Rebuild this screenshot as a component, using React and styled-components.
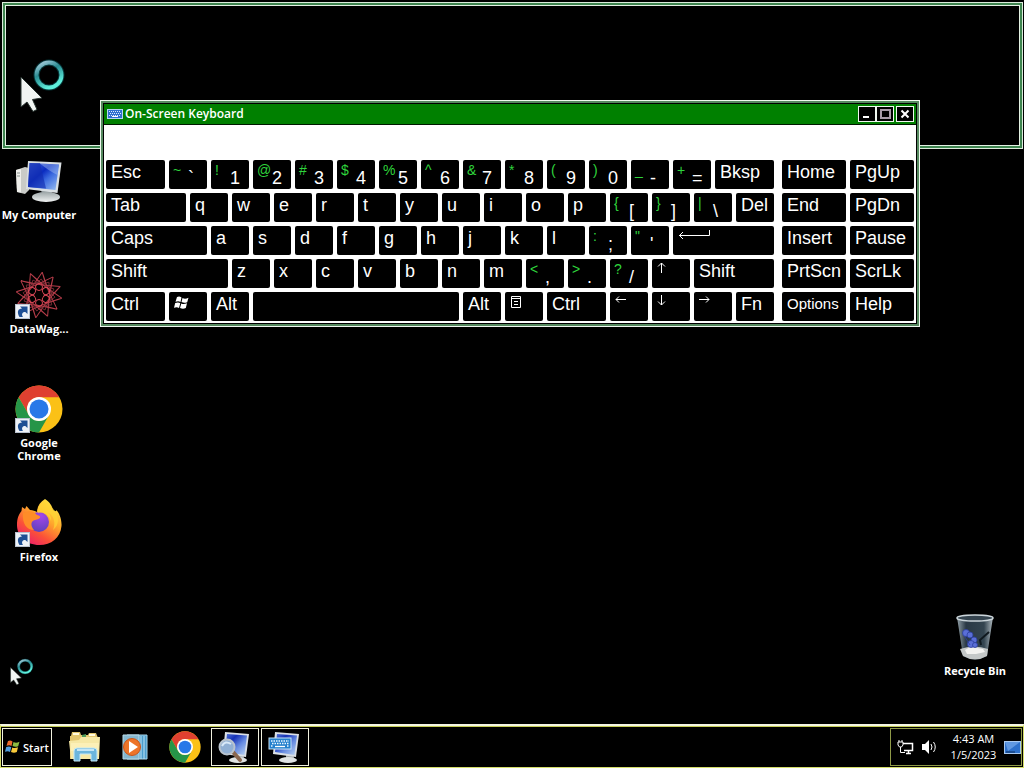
import React from "react";
import styled, { createGlobalStyle } from "styled-components";

const GlobalStyle = createGlobalStyle`
  * { box-sizing: border-box; }
  body { margin: 0; background: #000; color: #fff; font-family: "Open Sans", "Noto Sans", sans-serif; }
  button { font: inherit; color: inherit; margin: 0; padding: 0; border: 0; background: none; cursor: default; }
`;

const Desktop = styled.div`
  position: relative;
  display: flex;
  flex-direction: column;
  min-height: 100vh;
  background: #000;
`;

const Magnifier = styled.section`
  height: 147px;
  margin: 2px 1px 0 2px;
  border: 1px solid #dcecdc;
  box-shadow: inset 0 0 0 2px #3f8550, inset 0 0 0 3px #e4f2e4;
`;

const Pointer = styled.svg`
  position: absolute;
  left: ${(p) => p.$x}px;
  top: ${(p) => p.$y}px;
  pointer-events: none;
`;

const Workspace = styled.main`
  flex: 1;
  display: flex;
  justify-content: space-between;
  padding: 8px 10px 0 0;
`;

const IconColumn = styled.div`
  display: flex;
  flex-direction: column;
  justify-content: ${(p) => (p.$bottom ? "flex-end" : "flex-start")};
  padding-bottom: ${(p) => (p.$bottom ? 43 : 0)}px;
`;

const DesktopIcon = styled.button`
  display: flex;
  flex-direction: column;
  align-items: center;
  width: 78px;
  min-height: ${(p) => (p.$short ? 68 : 114)}px;
  svg { display: block; width: 48px; height: 48px; }
`;

const IconLabel = styled.span`
  margin-top: 3px;
  font-size: 11px;
  font-weight: 700;
  line-height: 13px;
  white-space: pre-line;
  text-align: center;
`;

const Window = styled.section`
  position: absolute;
  left: 100px;
  right: 104px;
  top: 100px;
  border: 1px solid #eef8ee;
  background: #fff;
  box-shadow: inset 0 0 0 2px #568a60, inset 0 0 0 3px #000;
  padding: 3px;
`;

const TitleBar = styled.header`
  display: flex;
  align-items: center;
  height: 21px;
  padding: 0 2px 0 3px;
  background: #008000;
  border-bottom: 1px solid #001800;
`;

const Title = styled.h1`
  flex: 1;
  margin: 0 0 0 2px;
  font-size: 12px;
  font-weight: 600;
  line-height: 16px;
`;

const Caption = styled.button`
  width: 18px;
  height: 16px;
  margin-left: ${(p) => (p.$apart ? 2 : 0)}px;
  border: 1px solid #f0f8f0;
  background: #000;
  svg { display: block; }
`;

const Keyboard = styled.div`
  display: flex;
  gap: 8px;
  padding: 35px 2px 2px;
`;

const KeyBlock = styled.div`
  flex: ${(p) => p.$w} 1 ${(p) => p.$w}px;
  display: flex;
  flex-direction: column;
  gap: 4px;
`;

const KeyRow = styled.div`
  display: flex;
  gap: 4px;
`;

const KeyCap = styled.button`
  flex: ${(p) => p.$w} 1 ${(p) => p.$w}px;
  display: flex;
  min-width: 0;
  height: 29px;
  padding: ${(p) => (p.$pair ? "0 0 0 4px" : "0 0 0 5px")};
  border-radius: 2px;
  background: #000;
  font-family: "Liberation Sans", Arial, sans-serif;
  font-size: ${(p) => (p.$small ? 15 : 18)}px;
  line-height: 24px;
  text-align: left;
  white-space: nowrap;
  overflow: hidden;
`;

const Shifted = styled.span`
  width: 15px;
  color: #2fd43c;
  font-size: 14px;
  line-height: 20px;
`;

const Base = styled.span`
  padding-top: 6px;
`;

const Taskbar = styled.footer`
  display: flex;
  align-items: center;
  height: 44px;
  padding: 1px 1px 0 1px;
  border: 1px solid #d5de6a;
  border-top: 2px solid #f4f6e4;
  box-shadow: inset 0 1px 0 #c3cc55;
  background: #000;
`;

const StartButton = styled.button`
  display: flex;
  align-items: center;
  gap: 2px;
  width: 50px;
  height: 38px;
  padding-left: 2px;
  border: 1px solid #f2f2e0;
  font-size: 11px;
  font-weight: 600;
`;

const Launchers = styled.nav`
  flex: 1;
  display: flex;
  align-items: center;
  margin-left: 9px;
  gap: 2px;
`;

const TaskButton = styled.button`
  display: flex;
  align-items: center;
  justify-content: center;
  width: 48px;
  height: 38px;
  border: 1px solid ${(p) => (p.$open ? "#f2f2e0" : "transparent")};
`;

const Tray = styled.div`
  display: flex;
  align-items: center;
  width: 132px;
  height: 38px;
  padding-left: 6px;
  border: 1px solid #8f9a48;
  button { display: flex; }
`;

const Clock = styled.time`
  flex: 1;
  padding-left: 4px;
  font-size: 11px;
  line-height: 16px;
  text-align: center;
`;

const Busy = ({ big }) => (
  <Pointer $x={big ? 18 : 9} $y={big ? 52 : 655} width={big ? 50 : 26} height={big ? 64 : 32} viewBox="0 0 50 64" preserveAspectRatio="none">
    <defs>
      <linearGradient id={big ? "ringBig" : "ringSmall"} x1="0" y1="0" x2=".5" y2="1">
        <stop offset="0" stopColor="#b4d3e4" />
        <stop offset=".45" stopColor="#2a8c92" />
        <stop offset="1" stopColor="#5ff0dc" />
      </linearGradient>
    </defs>
    <circle cx="31" cy="23" r="12.500" fill="none" stroke="#06383b" strokeWidth="6" />
    <circle cx="31" cy="23" r="12.500" fill="none" stroke={`url(#${big ? "ringBig" : "ringSmall"})`} strokeWidth="4" />
    <path d="M3 25V55L9 50L15 59.500L19 57.500L14.500 47.500L24 46Z" fill="#f1f5f3" stroke="#26322e" strokeWidth="1" />
  </Pointer>
);

const Badge = () => (
  <g>
    <rect x=".5" y="33.500" width="14" height="14" fill="#eef2f7" stroke="#b9c2cf" />
    <path d="M4.500 46C1.500 41 3 37.500 7 37.500L5 35.500H12.500V43L10.300 41C7.500 41 6 43 8 46Z" fill="#1e4f94" />
  </g>
);

const ComputerIcon = () => (
  <svg viewBox="0 0 48 48" aria-hidden="true">
    <defs>
      <linearGradient id="pcScreen" x1="0" y1="0" x2="1" y2="1">
        <stop offset="0" stopColor="#4e70dd" /><stop offset=".4" stopColor="#0a2bc0" /><stop offset=".6" stopColor="#3c6be0" /><stop offset="1" stopColor="#9fc4f2" />
      </linearGradient>
      <linearGradient id="pcBase" x1="0" y1="0" x2="0" y2="1">
        <stop offset="0" stopColor="#9da6a8" /><stop offset="1" stopColor="#f1f3f3" />
      </linearGradient>
    </defs>
    <path d="M1 13L10 10L14 11V33L10 37L2 35Z" fill="#c9cbc7" />
    <path d="M1 13L6 12V35.500L2 35Z" fill="#eeeeea" />
    <path d="M2 16H5M2 19H5" stroke="#86908c" />
    <path d="M26 32H36L37 38H27Z" fill="#8d9699" />
    <ellipse cx="31" cy="40" rx="14" ry="5" fill="url(#pcBase)" />
    <path d="M13 4L46.500 5.500L42.500 36L11 32Z" fill="#dadfe2" />
    <path d="M14.500 6L44 7.500L40.500 33L13 30Z" fill="url(#pcScreen)" />
    <path d="M14.500 6H25L31 31.500L13 30Z" fill="#122eb0" opacity=".65" />
    <path d="M25 6.500L44 7.500L42.500 18Q34 14 25 6.500Z" fill="#a7c2f2" opacity=".45" />
  </svg>
);

const ring = [0, 1, 2, 3, 4, 5, 6, 7, 8, 9, 10, 11];

const WagonIcon = () => (
  <svg viewBox="0 0 48 48" aria-hidden="true">
    <g fill="none" stroke="#b53c49" strokeWidth="1">
      {ring.map((i) => (
        <g key={i} transform={`rotate(${i * 30 + 8} 24 24)`}>
          <path d="M24 1L15 19M24 1L33 19M24 1L29 12" />
          <path d="M16 10Q24 14 32 10" stroke="#86303a" strokeWidth=".8" />
        </g>
      ))}
      {ring.filter((i) => i % 2 === 0).map((i) => (
        <circle key={i} cx="24" cy="16" r="3.500" stroke="#d84655" transform={`rotate(${i * 30} 24 24)`} />
      ))}
    </g>
    <circle cx="24" cy="24" r="4" fill="#080000" />
    <Badge />
  </svg>
);

const ChromeMark = () => (
  <g>
    <circle cx="24" cy="24" r="23.500" fill="#fbc116" />
    <path d="M3.650 12.250A23.500 23.500 0 0 1 44.350 12.250H24A11.750 11.750 0 0 0 13.820 29.870Z" fill="#df4030" />
    <path d="M3.650 12.250A23.500 23.500 0 0 0 24 47.500L34.180 29.870A11.750 11.750 0 0 1 13.820 29.870Z" fill="#269548" />
    <circle cx="24" cy="24" r="12" fill="#fff" />
    <circle cx="24" cy="24" r="9.500" fill="#2878e8" />
  </g>
);

const FirefoxIcon = () => (
  <svg viewBox="0 0 48 48" aria-hidden="true">
    <defs>
      <linearGradient id="fox" x1=".85" y1="0" x2=".2" y2="1">
        <stop offset="0" stopColor="#fff24a" /><stop offset=".4" stopColor="#ffa72c" /><stop offset=".7" stopColor="#fb5138" /><stop offset="1" stopColor="#ec1870" />
      </linearGradient>
      <radialGradient id="globe" cx=".6" cy=".2" r=".9">
        <stop offset="0" stopColor="#a345ea" /><stop offset="1" stopColor="#5841b4" />
      </radialGradient>
    </defs>
    <path d="M30 0C35 3 37 7 38 11C40 12 41 13 41.500 11C44 14 47 20 46.500 27C45.500 39 36 46 24.500 46C11 46 2 37 2 26C2 19 4 15 6.500 12L7 8L10 10L11.500 7L15 11C18 11 20 12 22 13C22 8 25 3 30 0Z" fill="url(#fox)" />
    <circle cx="24" cy="23" r="10" fill="url(#globe)" />
    <path d="M8 14C14 11 19 12 22 16C27 17 26 20 20 21C16 22 15 26 19 31C12 31 7 25 8 14Z" fill="#ff8c28" />
    <path d="M23 14C29 12 34 16 36 22C37 19 35 15 32 13C39 16 41 24 38 31C42 28 43 24 43 20C42 12 37 9 30 1C24 5 22 9 23 14Z" fill="#ffd534" opacity=".7" />
    <Badge />
  </svg>
);

const BinIcon = () => (
  <svg viewBox="0 0 48 48" aria-hidden="true">
    <defs>
      <linearGradient id="bin" x1="0" x2="1" y1="0" y2="0">
        <stop offset="0" stopColor="#99a8b0" /><stop offset=".25" stopColor="#2c3c49" /><stop offset=".75" stopColor="#364854" /><stop offset="1" stopColor="#b6c1c7" />
      </linearGradient>
    </defs>
    <path d="M6 4L12 43Q24 50 36 43L42 4Z" fill="url(#bin)" opacity=".95" />
    <path d="M9 36Q23 31 37 36L36 43Q24 50 12 43Z" fill="#c4c8c8" />
    <path d="M14 37L19 34L26 35L32 36L34 39L25 41L16 41Z" fill="#f2f2f0" />
    <g fill="#5a6fd6" stroke="#2c3f9f" strokeWidth=".8">
      <circle cx="15" cy="20" r="3.500" /><circle cx="19" cy="22" r="3" />
      <circle cx="23" cy="27" r="3" /><circle cx="20" cy="31" r="3.500" /><circle cx="24" cy="32" r="2.500" />
      <path d="M14 24L19 32" fill="none" />
    </g>
    <path d="M38 19L29 27L30 32" fill="none" stroke="#10191f" strokeWidth="2" />
    <ellipse cx="24" cy="5" rx="18" ry="3" fill="#34434e" stroke="#cbd5da" strokeWidth="1.500" />
  </svg>
);

const Flag = ({ mono }) => (
  <svg width="16" height="16" viewBox="0 0 16 16" aria-hidden="true">
    <path d="M3 2C5 1 6 1.500 7.500 2.500L6.500 7C5 6 3.500 6 1.500 6.800Z" fill={mono ? "#fff" : "#ed6b2d"} />
    <path d="M8.500 3C10.500 4 12 3.800 14.500 2.800L13.200 7.200C11 8 9.500 8 7.500 7Z" fill={mono ? "#fff" : "#8dbb41"} />
    <path d="M1.200 8C3.500 7 5 7.300 6.300 8.200L5 13C3.500 12 2 12 0 12.800Z" fill={mono ? "#fff" : "#529ddd"} />
    <path d="M7.300 8.500C9 9.300 10.500 9.200 13 8.300L11.800 13C9.500 14 8 13.800 6 12.900Z" fill={mono ? "#fff" : "#f8c93a"} />
  </svg>
);

const KeysDrawing = () => (
  <g>
    <rect x="0" y="0" width="22" height="11" fill="#2580cd" stroke="#c7e4f8" />
    <path d="M2 3H20M3 5.500H20M2 8H4M18 8H20" stroke="#e9f6ff" strokeWidth="1.300" strokeDasharray="1.500 1" />
    <path d="M6 8.500H16" stroke="#fff" strokeWidth="1.300" />
  </g>
);

const TitleIcon = () => (
  <svg width="16" height="10" viewBox="0 0 16 10" aria-hidden="true">
    <rect x=".5" y=".5" width="15" height="9" fill="#2f6fcf" stroke="#b5d3f5" />
    <path d="M2 2.500H14M3 4.500H14M2 6.500H14" stroke="#dcebff" strokeDasharray="1 1" />
    <path d="M5 7.500H11" stroke="#fff" />
  </svg>
);

const FolderIcon = () => (
  <svg width="34" height="32" viewBox="0 0 34 32" aria-hidden="true">
    <path d="M3 5L4 1H12L13 4H20L21 2H28L30 7V28H2V5Z" fill="#e2c56e" />
    <path d="M5 3H11M21 4H27" stroke="#fff9dd" strokeWidth="2" />
    <path d="M14 4L18 3V7H14Z" fill="#4f9b5a" />
    <path d="M1 10L11 9L13 6H32L31 28H3Z" fill="#f6e8a5" />
    <path d="M3 12H31L30 20H3Z" fill="#fff4bf" opacity=".7" />
    <path d="M6 30V20Q6 17 9 17H26Q29 17 29 20V30H23V23H12V30Z" fill="#6cb6dd" stroke="#c6e9f6" />
    <path d="M9 19H26" stroke="#e1f6ff" strokeWidth="1.500" />
  </svg>
);

const PlayerIcon = () => (
  <svg width="28" height="28" viewBox="0 0 28 28" aria-hidden="true">
    <path d="M6 2H26V26H6Z" fill="#4c9dcc" stroke="#a9d7ec" />
    <path d="M20 3V26M23 3V26" stroke="#bfe4f5" />
    <path d="M2 2H18V26H2Z" fill="#85b7cf" stroke="#b9dbe8" />
    <circle cx="11" cy="14" r="8.500" fill="#ed7428" stroke="#c9571b" />
    <path d="M8 8L17 14L8 20Z" fill="#fff" />
  </svg>
);

const MonitorTask = ({ lens }) => (
  <svg width="34" height="34" viewBox="0 0 34 34" aria-hidden="true">
    <defs>
      <linearGradient id={lens ? "screenA" : "screenB"} x1="0" y1="0" x2="1" y2="1">
        <stop offset="0" stopColor="#5577d9" /><stop offset=".3" stopColor="#1531b5" /><stop offset=".6" stopColor="#668be1" /><stop offset="1" stopColor="#c0d8f2" />
      </linearGradient>
    </defs>
    <path d="M18 23H25L26 28H18Z" fill="#a5abad" />
    <ellipse cx="20" cy="30" rx="9" ry="3" fill="#dfe3e3" />
    <path d="M7 2L31 4L28 27L5 24Z" fill="#dbe0e5" />
    <path d="M9 4L29 5.500L26.500 25L7 22Z" fill={`url(#${lens ? "screenA" : "screenB"})`} />
    {lens ? (
      <g>
        <path d="M15 22L22 30" stroke="#8a6850" strokeWidth="4" strokeLinecap="round" />
        <circle cx="9" cy="17" r="7.500" fill="#91b0d4" stroke="#b9c3cd" strokeWidth="2" />
        <path d="M4 16Q7 10 13 14" fill="none" stroke="#d9e9f8" strokeWidth="2" />
      </g>
    ) : (
      <g transform="translate(1 8)"><KeysDrawing /></g>
    )}
  </svg>
);

const line = { fill: "none", stroke: "#fff", strokeWidth: 1 };
const drawings = {
  win: <Flag mono />,
  menu: <svg width="12" height="14" viewBox="0 0 12 14"><path d="M1.500 1.500H10.500V12.500H1.500ZM1 3.500H11M4 6.500H8M4 9.500H8" {...line} /></svg>,
  enter: <svg width="32" height="12" viewBox="0 0 32 12"><path d="M31.500 1V6.500H1M5 3L1.500 6.500L5 10" {...line} /></svg>,
  left: <svg width="12" height="12" viewBox="0 0 12 12"><path d="M11 4.500H1M4 1.500L1 4.500L4 7.500" {...line} /></svg>,
  right: <svg width="12" height="12" viewBox="0 0 12 12"><path d="M0 4.500H10M7 1.500L10 4.500L7 7.500" {...line} /></svg>,
  up: <svg width="10" height="12" viewBox="0 0 10 12"><path d="M4.500 11V1M1 4.500L4.500 1L8 4.500" {...line} /></svg>,
  down: <svg width="10" height="12" viewBox="0 0 10 12"><path d="M4.500 0V10M1 6.500L4.500 10L8 6.500" {...line} /></svg>,
};

const Drawing = styled.span`
  padding-top: 3px;
  svg { display: block; }
`;

const letters = (s) => [...s].map((c) => ({ t: c }));
const pairs = (s) => s.split(" ").map((p) => ({ s: p[0], t: p[1] }));

const mainRows = [
  [{ t: "Esc", w: 59 }, ...pairs("~` !1 @2 #3 $4 %5 ^6 &7 *8 (9 )0 _- +="), { t: "Bksp", w: 59 }],
  [{ t: "Tab", w: 80 }, ...letters("qwertyuiop"), ...pairs("{[ }] |\\"), { t: "Del" }],
  [{ t: "Caps", w: 101 }, ...letters("asdfghjkl"), ...pairs(":; \"'"), { d: "enter", name: "Enter", w: 101 }],
  [{ t: "Shift", w: 122 }, ...letters("zxcvbnm"), ...pairs("<, >. ?/"), { d: "up", name: "Up" }, { t: "Shift", w: 80 }],
  [
    { t: "Ctrl", w: 59 }, { d: "win", name: "Windows" }, { t: "Alt" }, { name: "Space", w: 206 }, { t: "Alt" },
    { d: "menu", name: "Menu" }, { t: "Ctrl", w: 59 }, { d: "left", name: "Left" }, { d: "down", name: "Down" },
    { d: "right", name: "Right" }, { t: "Fn" },
  ],
];

const sideRows = [
  [{ t: "Home", w: 64 }, { t: "PgUp", w: 64 }],
  [{ t: "End", w: 64 }, { t: "PgDn", w: 64 }],
  [{ t: "Insert", w: 64 }, { t: "Pause", w: 64 }],
  [{ t: "PrtScn", w: 64 }, { t: "ScrLk", w: 64 }],
  [{ t: "Options", w: 64, small: true }, { t: "Help", w: 64 }],
];

const Key = ({ k }) => (
  <KeyCap type="button" $w={k.w || 38} $pair={Boolean(k.s)} $small={k.small} aria-label={k.name}>
    {k.s && <Shifted>{k.s}</Shifted>}
    {k.s ? <Base>{k.t}</Base> : k.t}
    {k.d && <Drawing>{drawings[k.d]}</Drawing>}
  </KeyCap>
);

const Rows = ({ rows }) => rows.map((row, i) => (
  <KeyRow key={i}>{row.map((k, j) => <Key key={j} k={k} />)}</KeyRow>
));

export default function App() {
  return (
    <Desktop>
      <GlobalStyle />
      <Magnifier aria-label="Magnifier" />
      <Workspace>
        <IconColumn>
          <DesktopIcon type="button"><ComputerIcon /><IconLabel>My Computer</IconLabel></DesktopIcon>
          <DesktopIcon type="button"><WagonIcon /><IconLabel>DataWag...</IconLabel></DesktopIcon>
          <DesktopIcon type="button">
            <svg viewBox="0 0 48 48" aria-hidden="true"><ChromeMark /><Badge /></svg>
            <IconLabel>{"Google\nChrome"}</IconLabel>
          </DesktopIcon>
          <DesktopIcon type="button"><FirefoxIcon /><IconLabel>Firefox</IconLabel></DesktopIcon>
        </IconColumn>
        <IconColumn $bottom>
          <DesktopIcon type="button" $short><BinIcon /><IconLabel>Recycle Bin</IconLabel></DesktopIcon>
        </IconColumn>
      </Workspace>

      <Taskbar>
        <StartButton type="button"><Flag />Start</StartButton>
        <Launchers aria-label="Taskbar">
          <TaskButton type="button" aria-label="Explorer"><FolderIcon /></TaskButton>
          <TaskButton type="button" aria-label="Media Player"><PlayerIcon /></TaskButton>
          <TaskButton type="button" aria-label="Chrome"><svg width="32" height="32" viewBox="0 0 48 48"><ChromeMark /></svg></TaskButton>
          <TaskButton type="button" $open aria-label="Magnifier"><MonitorTask lens /></TaskButton>
          <TaskButton type="button" $open aria-label="On-Screen Keyboard"><MonitorTask /></TaskButton>
        </Launchers>
        <Tray>
          <button type="button" aria-label="Network">
            <svg width="18" height="16" viewBox="0 0 18 16"><path d="M6 4.500H15.500V11.500H7M9 14.500H14M11.500 12V14" fill="none" stroke="#fff" strokeWidth="1.500" /><path d="M1 3H6V6L4.500 8H2.500L1 6ZM2 1V3M5 1V3M3.500 8V13.500H8" fill="none" stroke="#fff" /></svg>
          </button>
          <button type="button" aria-label="Volume">
            <svg width="24" height="16" viewBox="0 0 24 16"><path d="M7 5H10L14 1V15L10 11H7Z" fill="#fff" /><path d="M16 5Q18 8 16 11M18.500 3Q22 8 18.500 13" fill="none" stroke="#fff" /></svg>
          </button>
          <Clock>4:43 AM<br />1/5/2023</Clock>
          <button type="button" aria-label="Show desktop">
            <svg width="17" height="15" viewBox="0 0 17 15"><rect x=".5" y="1.500" width="16" height="12" fill="#2d70cb" stroke="#a9c9ef" /><path d="M1 2H16L4 11Z" fill="#76aaea" opacity=".7" /><path d="M2 12H11" stroke="#0d2d5c" /></svg>
          </button>
        </Tray>
      </Taskbar>

      <Window aria-label="On-Screen Keyboard">
        <TitleBar>
          <TitleIcon />
          <Title>On-Screen Keyboard</Title>
          <Caption type="button" aria-label="Minimize"><svg width="16" height="14"><path d="M4 10H10" stroke="#fff" strokeWidth="2" /></svg></Caption>
          <Caption type="button" aria-label="Maximize"><svg width="16" height="14"><path d="M4 3H13V11H4Z" fill="none" stroke="#a89ca8" strokeWidth="2" /></svg></Caption>
          <Caption type="button" $apart aria-label="Close"><svg width="16" height="14"><path d="M4.500 3.500L11.500 10.500M11.500 3.500L4.500 10.500" stroke="#fff" strokeWidth="2" /></svg></Caption>
        </TitleBar>
        <Keyboard>
          <KeyBlock $w={668}><Rows rows={mainRows} /></KeyBlock>
          <KeyBlock $w={132}><Rows rows={sideRows} /></KeyBlock>
        </Keyboard>
      </Window>

      <Busy big />
      <Busy />
    </Desktop>
  );
}
